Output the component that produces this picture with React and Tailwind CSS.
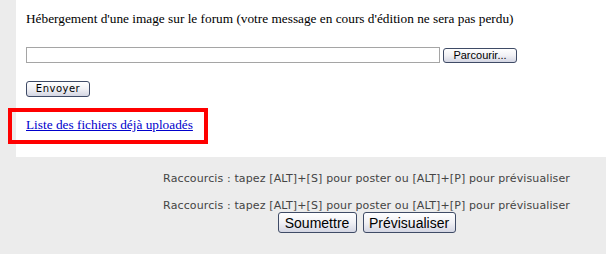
const btn = "rounded-[3px] border border-[#3f4b66] bg-gradient-to-b from-white via-[#f1f1f5] to-[#d4d6e3] text-black leading-none"

const App = () => {
    const shortcut = "Raccourcis : tapez [ALT]+[S] pour poster ou [ALT]+[P] pour prévisualiser"

    return (
        <div className="w-[606px] h-[254px] bg-[#ececec] relative overflow-hidden">
            {/* zone blanche */}
            <div className="ml-[16px] h-[157px] bg-white pl-[10px] pt-[11px] font-['Liberation_Serif',serif] text-[13.3px] text-black">
                <p className="leading-[15px]">Hébergement d'une image sur le forum (votre message en cours d'édition ne sera pas perdu)</p>

                <div className="flex items-center gap-[3px] mt-[21px]">
                    <div className="w-[414px] h-[16px] border border-[#a5a5a5] bg-white"></div>
                    <button className={`${btn} w-[74px] h-[15px] text-[11px] font-['Liberation_Sans',sans-serif] text-[#222]`}>Parcourir...</button>
                </div>

                <button className={`${btn} mt-[18px] w-[64px] h-[16px] text-[10px] font-['DejaVu_Sans',sans-serif] tracking-[0.5px]`}>Envoyer</button>

                <div className="mt-[17px]">
                    <a href="#" className="text-[#0000cc] underline">Liste des fichiers déjà uploadés</a>
                </div>
            </div>

            {/* raccourcis */}
            <div className="flex justify-end pr-[36px] pt-[15px] font-['DejaVu_Sans',sans-serif] text-[11px] tracking-[0.12px] text-[#444]">
                <div className="flex flex-col items-center">
                    <p className="leading-[13px]">{shortcut}</p>
                    <p className="leading-[13px] mt-[14px]">{shortcut}</p>
                    <div className="flex gap-[6px] mt-[0px] font-['Liberation_Sans',sans-serif] text-[14px] tracking-normal">
                        <button className={`${btn} w-[79px] h-[21px]`}>Soumettre</button>
                        <button className={`${btn} w-[93px] h-[21px]`}>Prévisualiser</button>
                    </div>
                </div>
            </div>

            {/* cadre rouge */}
            <div className="absolute left-[8px] top-[108px] w-[200px] h-[36px] border-[4px] border-[#ff0000]"></div>
        </div>
    )
}

export default App
